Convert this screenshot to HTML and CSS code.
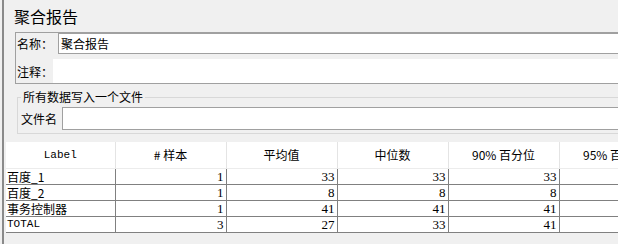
FILE: index.html
```
<!DOCTYPE html>
<html lang="zh-CN">
<head>
    <meta charset="UTF-8">
    <meta name="viewport" content="width=device-width, initial-scale=1.0">
    <title>聚合报告</title>
    <link rel="stylesheet" href="styles.css">
</head>
<body>
    <div class="frame">
        <h2 class="title">聚合报告</h2>

        <div class="group">
            <div class="row row-name">
                <span class="label label-name">名称：</span>
                <div class="text-field">聚合报告</div>
            </div>
            <div class="row row-comment">
                <span class="label label-comment">注释：</span>
                <div class="text-area"></div>
            </div>
        </div>

        <fieldset class="file-box">
            <legend>所有数据写入一个文件</legend>
            <div class="row row-file">
                <span class="label label-file">文件名</span>
                <div class="text-field file-field"></div>
            </div>
        </fieldset>

        <div class="table-wrap">
            <table class="report">
                <colgroup>
                    <col class="col-first">
                    <col class="col">
                    <col class="col">
                    <col class="col">
                    <col class="col">
                    <col class="col">
                </colgroup>
                <thead>
                    <tr>
                        <th class="latin">Label</th>
                        <th># 样本</th>
                        <th>平均值</th>
                        <th>中位数</th>
                        <th>90% 百分位</th>
                        <th>95% 百分位</th>
                    </tr>
                </thead>
                <tbody>
                    <tr>
                        <td class="name">百度_1</td>
                        <td class="num">1</td>
                        <td class="num">33</td>
                        <td class="num">33</td>
                        <td class="num">33</td>
                        <td class="num"></td>
                    </tr>
                    <tr>
                        <td class="name">百度_2</td>
                        <td class="num">1</td>
                        <td class="num">8</td>
                        <td class="num">8</td>
                        <td class="num">8</td>
                        <td class="num"></td>
                    </tr>
                    <tr>
                        <td class="name">事务控制器</td>
                        <td class="num">1</td>
                        <td class="num">41</td>
                        <td class="num">41</td>
                        <td class="num">41</td>
                        <td class="num"></td>
                    </tr>
                    <tr>
                        <td class="name latin">TOTAL</td>
                        <td class="num">3</td>
                        <td class="num">27</td>
                        <td class="num">33</td>
                        <td class="num">41</td>
                        <td class="num"></td>
                    </tr>
                </tbody>
            </table>
        </div>
    </div>
</body>
</html>
```
FILE: styles.css
```
body {
    margin: 0;
    padding: 0;
    background-color: #f0f0f0;
    color: #000;
    font-family: "Noto Sans CJK SC", "Liberation Sans", sans-serif;
    font-size: 12px;
    overflow: hidden;
}

.frame {
    margin-left: 2px;
    border-left: 2px solid #8a8a8a;
    height: 244px;
    overflow: hidden;
}

.title {
    margin: 0 0 0 10px;
    padding-top: 2px;
    height: 28px;
    line-height: 28px;
    font-size: 16px;
    font-weight: normal;
}

.group {
    margin: 2px 0 0 11px;
    border: 1px solid #a0a0a0;
    border-right: none;
    height: 50px;
}

.row {
    display: flex;
    align-items: stretch;
}

.row-name {
    height: 21px;
}

.row-comment {
    margin-top: 5px;
    height: 24px;
}

.label {
    display: flex;
    align-items: center;
    padding-left: 1px;
    box-sizing: border-box;
    white-space: nowrap;
}

.label-name {
    width: 42px;
}

.label-comment {
    width: 37px;
}

.text-field {
    flex: 1;
    background: #fff;
    border: 1px solid #a0a0a0;
    border-right: none;
    padding-left: 2px;
    line-height: 19px;
}

.text-area {
    flex: 1;
    background: #fff;
}

.file-box {
    margin: 5px 0 0 13px;
    padding: 0 0 3px 3px;
    border: 1px solid #d8d8d8;
    border-right: none;
}

.file-box legend {
    padding: 0 2px;
    line-height: 16px;
}

.row-file {
    margin-top: 2px;
    height: 23px;
}

.label-file {
    width: 41px;
    padding-left: 0;
}

.table-wrap {
    margin: 8px 0 0 2px;
    overflow: hidden;
}

.report {
    border-collapse: collapse;
    table-layout: fixed;
    width: 664px;
    background: #fff;
}

.col-first {
    width: 109px;
}

.col {
    width: 111px;
}

.report th {
    height: 26px;
    padding: 0;
    font-weight: normal;
    text-align: center;
    white-space: nowrap;
    border-right: 1px solid #e4e4e4;
    border-bottom: 1px solid #ececec;
    box-sizing: border-box;
}

.report td {
    height: 16px;
    padding: 0 2px 0 1px;
    line-height: 15px;
    border-right: 1px solid #808080;
    border-bottom: 1px solid #808080;
    box-sizing: border-box;
    white-space: nowrap;
    overflow: hidden;
}

.report .num {
    text-align: right;
    font-family: "Liberation Serif", serif;
    font-size: 13px;
}

.latin {
    font-family: "Liberation Mono", monospace;
    font-size: 11px;
}
```
